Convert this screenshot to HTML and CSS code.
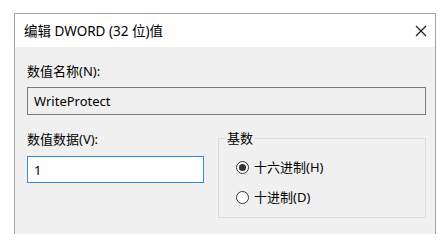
FILE: index.html
```html
<!DOCTYPE html>
<html lang="zh-CN">
<head>
<meta charset="utf-8">
<title>编辑 DWORD (32 位)值</title>
<link rel="stylesheet" href="styles.css">
</head>
<body>
<div class="window">
  <div class="titlebar">
    <span class="title">编辑 DWORD (32 位)值</span>
    <svg class="close" width="12" height="12" viewBox="0 0 12 12"><path d="M1 1 L11 11 M11 1 L1 11" stroke="#1a1a1a" stroke-width="1.1" fill="none"/></svg>
  </div>
  <div class="content">
    <div class="label first">数值名称(N):</div>
    <div class="input disabled">WriteProtect</div>
    <div class="row">
      <div class="col">
        <div class="label second">数值数据(V):</div>
        <div class="input focused">1</div>
      </div>
      <fieldset class="group">
        <legend>基数</legend>
        <div class="radio first-radio"><span class="dot checked"></span><span>十六进制(H)</span></div>
        <div class="radio"><span class="dot"></span><span>十进制(D)</span></div>
      </fieldset>
    </div>
  </div>
</div>
</body>
</html>
```

FILE: styles.css
```css
html, body {
  margin: 0;
  padding: 0;
  background: #ffffff;
  height: 234px;
  overflow: hidden;
}
body {
  font-family: "Noto Sans", "Noto Sans CJK SC", sans-serif;
  font-size: 13px;
  color: #000;
}
.window {
  margin: 13px 0 0 14px;
  width: 422px;
  height: 221px;
  box-sizing: border-box;
  border: 1px solid #a3a3a3;
  border-bottom: none;
  background: #f0f0f0;
  overflow: hidden;
}
.titlebar {
  height: 33px;
  background: #ffffff;
  display: flex;
  align-items: center;
  justify-content: space-between;
  padding: 0 8px 0 9px;
}
.title {
  font-size: 13.5px;
  line-height: 20px;
  margin-top: 1px;
}
.close {
  display: block;
  margin-top: 1px;
}
.content {
  padding: 0 9px 0 12px;
}
.label {
  line-height: 20px;
  height: 20px;
}
.label.first {
  padding-top: 14px;
}
.input {
  box-sizing: border-box;
  border: 1px solid #7a7a7a;
  padding: 0 6px;
  display: flex;
  align-items: center;
  margin-top: 6px;
  height: 28px;
}
.input.disabled {
  background: #f0f0f0;
}
.input.focused {
  background: #ffffff;
  border-color: #2f8ae0;
  height: 27px;
  margin-top: 7px;
}
.row {
  display: grid;
  grid-template-columns: 177px 208px;
  column-gap: 14px;
}
.label.second {
  margin-top: 14px;
}
.group {
  margin: 13px 0 0 0;
  padding: 0 8px 0 7px;
  border: 1px solid #dcdcdc;
  height: 90px;
  box-sizing: border-box;
  min-width: 0;
}
.group legend {
  padding: 0 1px;
  line-height: 20px;
}
.radio {
  display: flex;
  align-items: center;
  gap: 5px;
  height: 20px;
  line-height: 20px;
  padding-left: 10px;
  margin-top: 10px;
}
.radio.first-radio {
  margin-top: 9px;
}
.dot {
  width: 13px;
  height: 13px;
  box-sizing: border-box;
  border: 1px solid #333;
  border-radius: 50%;
  background: #fff;
  display: flex;
  align-items: center;
  justify-content: center;
}
.dot.checked::after {
  content: "";
  width: 7px;
  height: 7px;
  border-radius: 50%;
  background: #333;
}
```
